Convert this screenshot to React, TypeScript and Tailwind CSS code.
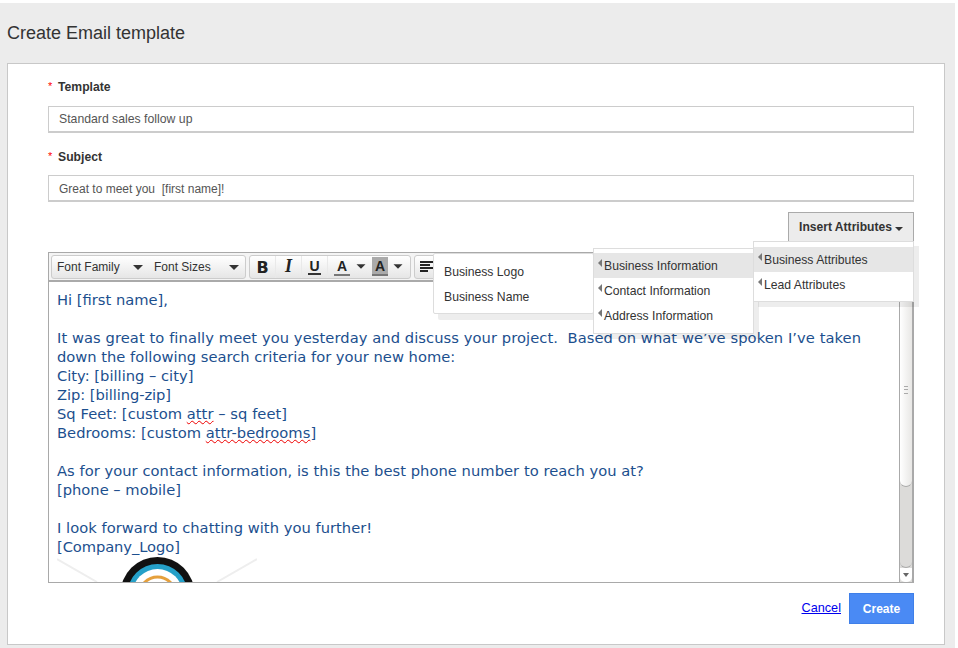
const sans = "font-['Liberation_Sans',Arial,sans-serif]";

function Caret({ className = "border-x-[5px] border-t-[5px]" }: { className?: string }) {
  return <span className={`w-0 h-0 border-x-transparent border-t-[#333] ${className}`} />;
}

function Field({ label, value, inputClass }: { label: string; value: string; inputClass: string }) {
  return (
    <div>
      <div className="flex items-center h-[20px] text-[12.2px] font-bold text-[#333]">
        <span className="w-[10px] text-[#f00] font-normal text-[11px] -mt-[2px]">*</span>
        <span>{label}</span>
      </div>
      <div className={`h-[27px] border-2 border-[#ccc] border-t-[1px] border-x-[1px] bg-white px-[10px] flex items-center text-[#555] whitespace-pre ${inputClass}`}>
        {value}
      </div>
    </div>
  );
}

function MenuItem({ label, active, arrow = true }: { label: string; active?: boolean; arrow?: boolean }) {
  return (
    <div className={`relative flex items-center h-[25px] pl-[10px] pt-[2px] text-[12.2px] text-[#333] ${active ? "bg-[#e6e6e6]" : ""}`}>
      {arrow && (
        <span className="absolute left-[4px] top-[6px] w-0 h-0 border-y-[4px] border-y-transparent border-r-[4px] border-r-[#777]" />
      )}
      {label}
    </div>
  );
}

function ToolBtn({ children, w, className = "" }: { children: React.ReactNode; w: string; className?: string }) {
  return <div className={`flex items-center justify-center h-full ${w} ${className}`}>{children}</div>;
}

function Logo() {
  return (
    <svg width="200" height="26" viewBox="0 0 200 26" className="block">
      <path d="M0 3 L40 26" stroke="#eeeeee" strokeWidth="2" fill="none" />
      <path d="M200 3 L160 26" stroke="#eeeeee" strokeWidth="2" fill="none" />
      <circle cx="100.5" cy="38" r="37" fill="#111" />
      <circle cx="100.5" cy="38" r="30" fill="#25a0c8" />
      <circle cx="100.5" cy="38" r="25" fill="#fff" />
      <circle cx="100.5" cy="39" r="19.5" fill="#e5a03c" />
      <circle cx="100.5" cy="39" r="16.5" fill="#fff" />
    </svg>
  );
}

export default function App() {
  return (
    <div className={`w-[958px] h-[648px] overflow-hidden bg-white pt-[3px] ${sans}`}>
      <div className="w-[955px] h-[645px] bg-[#ececec] pl-[7px] pr-[10px]">
        <h1 className="h-[60px] flex items-center text-[18px] text-[#333] pt-[1px]">Create Email template</h1>
        <div className="h-[582px] border border-[#c8c8c8] bg-white pl-[40px] pr-[30px] pt-[13px]">
          <Field label="Template" value="Standard sales follow up" inputClass="mt-[9px] text-[12.25px]" />
          <div className="mt-[14px]">
            <Field label="Subject" value="Great to meet you  [first name]!" inputClass="mt-[8px] pt-[2px] text-[12px]" />
          </div>

          <div className="flex justify-end mt-[10px]">
            <div className="flex items-center gap-[3px] justify-center w-[126px] h-[30px] pt-[1px] border border-[#aaa] bg-[#ececec] text-[12.1px] font-bold text-[#333]">
              Insert Attributes
              <Caret className="mt-[2px] border-x-[4px] border-t-[4px]" />
            </div>
          </div>

          <div className="relative mt-[10px] h-[331px] border border-[#a9a9a9] flex flex-col">
            {/* toolbar */}
            <div className="h-[29px] shrink-0 border-b-2 border-b-[#aaa] bg-[#f4f4f4] flex items-center gap-[3px] pl-[2px] overflow-hidden text-[12px] text-[#333]">
              <div className="flex items-center h-[24px] w-[195px] pt-[1px] rounded-[3px] border border-[#ccc] bg-gradient-to-b from-white to-[#e6e6e6]">
                <span className="pl-[5px] w-[81px]">Font Family</span>
                <Caret />
                <span className="ml-[11px] w-[75px]">Font Sizes</span>
                <Caret />
              </div>
              <div className="flex items-center h-[24px] w-[162px] rounded-[3px] border border-[#ccc] bg-gradient-to-b from-white to-[#e6e6e6] text-[#222]">
                <ToolBtn w="w-[26px]" className="border-r border-[#e9e9e9] pt-[2px] font-bold font-['DejaVu_Sans',sans-serif] text-[16px]">B</ToolBtn>
                <ToolBtn w="w-[26px]" className="border-r border-[#e9e9e9] italic font-bold font-['Liberation_Serif',serif] text-[18px]">I</ToolBtn>
                <ToolBtn w="w-[26px]" className="border-r border-[#e9e9e9]">
                  <span className="border-b-2 border-[#333] w-[13px] text-center leading-[14px] font-bold text-[14px]">U</span>
                </ToolBtn>
                <ToolBtn w="w-[26px]" className="ml-[1px]">
                  <span className="border-b-2 border-[#777] w-[16px] text-center leading-[15px] mt-[2px] font-bold text-[14px]">A</span>
                </ToolBtn>
                <Caret className="ml-[1px] scale-90 border-x-[5px] border-t-[5px]" />
                <ToolBtn w="w-[16px]" className="ml-[6px] !h-[19px] bg-[#aaa]">
                  <span className="border-b-2 border-[#777] w-[16px] text-center leading-[15px] mt-[2px] font-bold text-[14px]">A</span>
                </ToolBtn>
                <Caret className="ml-[5px] scale-90 border-x-[5px] border-t-[5px]" />
              </div>
              <div className="flex items-center h-[24px] w-[60px] rounded-[3px] border border-[#ccc] bg-gradient-to-b from-white to-[#e6e6e6] pl-[5px]">
                <svg width="15" height="11" viewBox="0 0 15 11">
                  <path d="M0 1h14M0 4h10M0 7h14M0 10h8" stroke="#222" strokeWidth="1.8" fill="none" />
                </svg>
              </div>
            </div>

            {/* editor body */}
            <div className="flex-1 flex min-h-0">
              <div className="flex-1 overflow-hidden pl-[8px] pt-[8px] font-['DejaVu_Sans',sans-serif] text-[14.7px] leading-[19px] text-[#1c4f8e]">
                <p>Hi [first name],</p>
                <br />
                <p className="whitespace-pre tracking-[0.07px]">It was great to finally meet you yesterday and discuss your project.  Based on what we’ve spoken I’ve taken</p>
                <p>down the following search criteria for your new home:</p>
                <p>City: [billing – city]</p>
                <p className="tracking-[-0.07px]">Zip: [billing-zip]</p>
                <p className="tracking-[0.05px]">Sq Feet: [custom <span className="underline decoration-wavy decoration-[#e00] decoration-1">attr</span> – sq feet]</p>
                <p className="tracking-[0.03px]">Bedrooms: [custom <span className="underline decoration-wavy decoration-[#e00] decoration-1">attr-bedrooms</span>]</p>
                <br />
                <p className="tracking-[0.04px]">As for your contact information, is this the best phone number to reach you at?</p>
                <p>[phone – mobile]</p>
                <br />
                <p className="tracking-[0.03px]">I look forward to chatting with you further!</p>
                <p className="tracking-[-0.08px]">[Company_Logo]</p>
                <Logo />
              </div>

              {/* scrollbar */}
              <div className="w-[14px] shrink-0 flex flex-col border-x border-[#aaa] bg-[#dcdbd9]">
                <div className="relative h-[205px] shrink-0 rounded-b-[6px] border-b border-[#aaa] bg-gradient-to-r from-white to-[#e8e7e5]">
                  <div className="absolute left-[4px] top-[104px] w-[4px] h-[8px] border-y border-[#aaa] after:block after:mt-[2px] after:h-[1px] after:bg-[#aaa]" />
                </div>
                <div className="flex-1 rounded-b-[6px] border-b border-[#aaa]" />
                <div className="h-[14px] shrink-0 rounded-b-[5px] bg-white flex items-center justify-center">
                  <Caret className="border-x-[3px] border-t-[4px] !border-t-[#666]" />
                </div>
              </div>
            </div>

            {/* nested insert menus */}
            <div className="absolute left-[384px] top-0 w-[161px] h-[61px] pt-[5px] border border-[#ddd] rounded-[2px] bg-white shadow-[5px_6px_0_rgba(0,0,0,0.07)]">
              <MenuItem label="Business Logo" arrow={false} />
              <MenuItem label="Business Name" arrow={false} />
            </div>
            <div className="absolute left-[544px] top-[-5px] w-[161px] h-[86px] pt-[4px] border border-[#ddd] bg-white shadow-[5px_5px_0_rgba(0,0,0,0.07)]">
              <MenuItem label="Business Information" active />
              <MenuItem label="Contact Information" />
              <MenuItem label="Address Information" />
            </div>
            <div className="absolute left-[704px] top-[-12px] w-[161px] h-[61px] pt-[5px] border border-[#ddd] bg-white shadow-[5px_5px_0_rgba(0,0,0,0.07)]">
              <MenuItem label="Business Attributes" active />
              <MenuItem label="Lead Attributes" />
            </div>
          </div>

          <div className="flex justify-end items-center gap-[8px] mt-[10px]">
            <a href="#" className="text-[12.7px] text-[#00e] underline">Cancel</a>
            <button className="w-[65px] h-[31px] bg-[#4a8af4] border border-[#3f7fe8] text-white text-[12px] font-bold">Create</button>
          </div>
        </div>
      </div>
    </div>
  );
}
